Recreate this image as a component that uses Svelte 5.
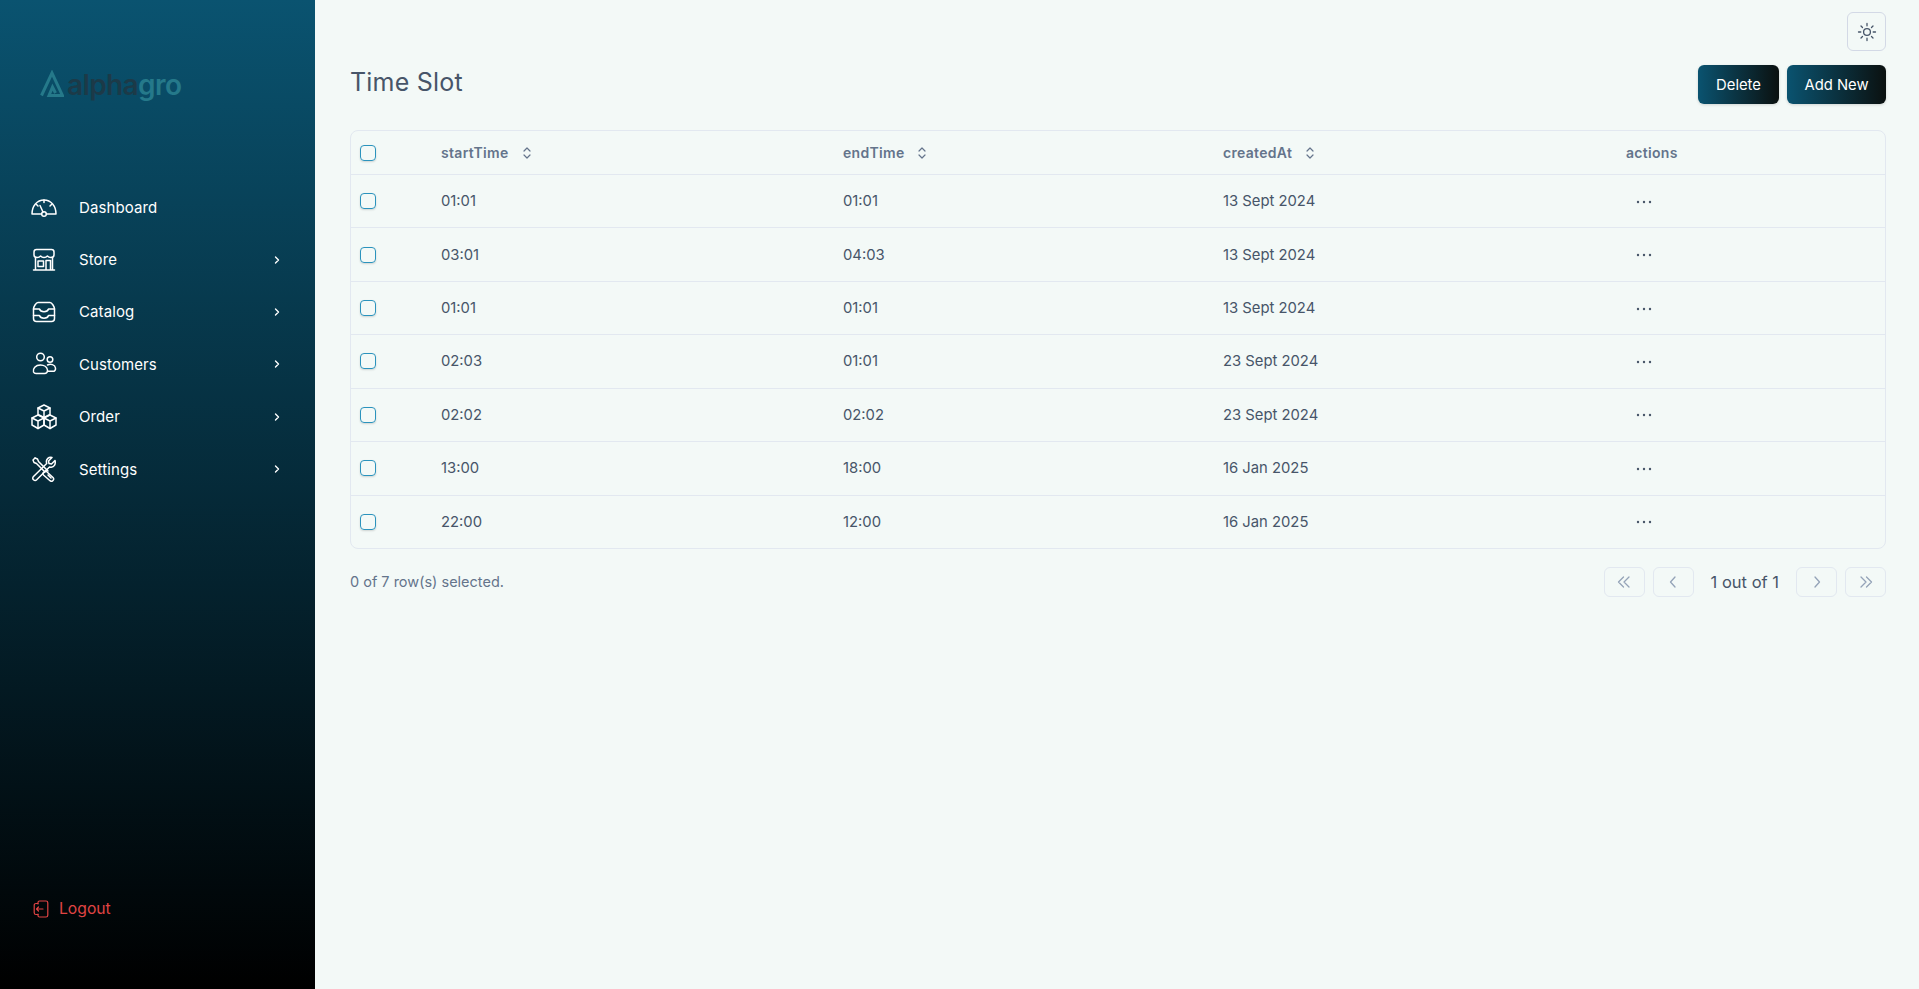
<script lang="ts">
  const navItems = [
    { label: 'Dashboard', icon: 'gauge', arrow: false },
    { label: 'Store', icon: 'store', arrow: true },
    { label: 'Catalog', icon: 'inbox', arrow: true },
    { label: 'Customers', icon: 'users', arrow: true },
    { label: 'Order', icon: 'boxes', arrow: true },
    { label: 'Settings', icon: 'tools', arrow: true }
  ];

  const rows = [
    { start: '01:01', end: '01:01', created: '13 Sept 2024' },
    { start: '03:01', end: '04:03', created: '13 Sept 2024' },
    { start: '01:01', end: '01:01', created: '13 Sept 2024' },
    { start: '02:03', end: '01:01', created: '23 Sept 2024' },
    { start: '02:02', end: '02:02', created: '23 Sept 2024' },
    { start: '13:00', end: '18:00', created: '16 Jan 2025' },
    { start: '22:00', end: '12:00', created: '16 Jan 2025' }
  ];
</script>

{#snippet sortIcon()}
  <svg class="sort" viewBox="0 0 10 16" width="10" height="16" fill="none" stroke="currentColor" stroke-width="1.2" stroke-linecap="round" stroke-linejoin="round">
    <path d="M2 6 5 3l3 3M2 10l3 3 3-3" />
  </svg>
{/snippet}

<div class="layout">
  <aside class="sidebar">
    <div class="logo">
      <svg viewBox="0 0 24 27" width="24" height="27" fill="none" stroke="#25798a" stroke-width="3" stroke-linejoin="miter">
        <path d="M1.500 25.500 12 3l10.500 22.500H9L12.500 17l3 6" />
      </svg>
      <span class="logo-text"><span class="dark">alpha</span><span class="teal">gro</span></span>
    </div>

    <nav class="nav">
      {#each navItems as item}
        <button class="nav-item">
          <span class="nav-icon">
            <svg viewBox="0 0 26 26" width="26" height="26" fill="none" stroke="currentColor" stroke-width="1.500" stroke-linecap="round" stroke-linejoin="round">
              {#if item.icon === 'gauge'}
                <path d="M10.500 20H1c0-8 5-14 12-14s12 6 12 14h-9.500" />
                <path d="M9 11.500 12 18M13 6v2.500M5.500 10.500 7 12M20.500 10.500 19 12" />
                <circle cx="13" cy="20" r="2.300" />
              {:else if item.icon === 'store'}
                <path d="M3 5C3 3.500 4 2.500 5.500 2.500h15C22 2.500 23 3.500 23 5v3c0 1.500-1.700 2.500-3.300 2.500-1.200 0-2.500-.6-3.300-1.500-.8.9-2.100 1.500-3.400 1.500s-2.600-.6-3.400-1.500c-.8.9-2.100 1.500-3.300 1.500C4.700 10.500 3 9.500 3 8z" />
                <path d="M4.500 10.500v12.500M21.500 10.500v12.500M2.500 23h21M15 23V13.500h4.500V23M7 14h5.500v5.500H7z" />
              {:else if item.icon === 'inbox'}
                <path d="M2.500 10C2.500 8 5 3.500 7 3.500h12c2 0 4.500 4.500 4.500 6.500v9.500a3 3 0 0 1-3 3h-15a3 3 0 0 1-3-3z" />
                <path d="M2.500 10h6c.5 1.700 2 2.700 4.500 2.700s4-1 4.500-2.700h6M2.500 16.500h6c.5 1.700 2 2.700 4.500 2.700s4-1 4.500-2.700h6" />
              {:else if item.icon === 'users'}
                <circle cx="9.500" cy="6" r="3.800" />
                <circle cx="19" cy="8.500" r="2.800" />
                <path d="M2.500 21c-1-3.500 2-7 7-7 3.500 0 6.500 2 7 5 .3 2-1 3.500-3 3.500H5c-1 0-2-.5-2.500-1.500z" />
                <path d="M16.500 14c3-1.500 7.500-.5 8 3 .3 2-1 3.300-2.500 3.300h-5.500" />
              {:else if item.icon === 'boxes'}
                <path d="M13 1l6 3v6.500l-6 3-6-3V4z" />
                <path d="M7 4l6 3 6-3M13 7v6.500" />
                <path d="M7 11l6 3v7l-6 3.500L1 21v-7z" />
                <path d="M1 14l6 3 6-3M7 17v7.500" />
                <path d="M19 11l6 3v7l-6 3.500L13 21v-7z" />
                <path d="M13 14l6 3 6-3M19 17v7.500" />
              {:else}
                <path d="M4 2 2 4l1 2.500 2.500 1L14 16" />
                <path d="M4 2l2.500 1 1 2.500L17 15" />
                <path d="M15.500 15.500 22 21.500a2.200 2.200 0 0 1-3 3.200L12.500 19c-.7-.7-.7-1.700 0-2.400l.9-.9c.6-.6 1.500-.7 2.100-.2zM20 22l-3-3" />
                <path d="M24 4.500 20.500 8l-2.500-.5-.5-2.500L21 1.500c-3-1-6.300 1.500-5.500 5l.2 1L2.500 20.500c-1 1-1 2.300 0 3.200s2.300.9 3.200 0L18.500 11l1 .2c3.500.6 5.500-3 4.500-6.700z" />
              {/if}
            </svg>
          </span>
          <span class="nav-label">{item.label}</span>
          {#if item.arrow}
            <svg class="chevron" viewBox="0 0 8 10" width="8" height="10" fill="none" stroke="currentColor" stroke-width="1.400" stroke-linecap="round" stroke-linejoin="round">
              <path d="M2.500 2 5.500 5l-3 3" />
            </svg>
          {/if}
        </button>
      {/each}
    </nav>

    <button class="logout">
      <svg viewBox="0 0 16 18" width="16" height="18" fill="none" stroke="currentColor" stroke-width="1.200" stroke-linecap="round" stroke-linejoin="round">
        <path d="M5 4V2.500C5 1.700 5.700 1 6.500 1h6.500c1 0 1.800.8 1.800 1.800v12.400c0 1-.8 1.800-1.800 1.800H6.500C5.700 17 5 16.300 5 15.500V14" />
        <path d="M5 3.500H3C2 3.500 1.200 4.300 1.200 5.300v7.400c0 1 .8 1.800 1.800 1.800h2M10 9H3.500M5.500 7l-2 2 2 2" />
      </svg>
      <span>Logout</span>
    </button>
  </aside>

  <main class="content">
    <div class="topbar">
      <button class="theme-btn" aria-label="Toggle theme">
        <svg viewBox="0 0 20 20" width="20" height="20" fill="none" stroke="currentColor" stroke-width="1.300" stroke-linecap="round">
          <circle cx="10" cy="10" r="3.400" />
          <path d="M10 1.500v2.300M10 16.200v2.300M1.500 10h2.300M16.200 10h2.300M4 4l1.500 1.500M14.500 14.500 16 16M4 16l1.500-1.500M14.500 5.500 16 4" />
        </svg>
      </button>
    </div>

    <div class="page-head">
      <h1>Time Slot</h1>
      <div class="head-actions">
        <button class="primary delete">Delete</button>
        <button class="primary add">Add New</button>
      </div>
    </div>

    <div class="table-wrap">
      <table>
        <colgroup>
          <col class="c-check" />
          <col class="c-start" />
          <col class="c-end" />
          <col class="c-created" />
          <col />
        </colgroup>
        <thead>
          <tr>
            <th><span class="checkbox"></span></th>
            <th><span class="th-inner">startTime {@render sortIcon()}</span></th>
            <th><span class="th-inner">endTime {@render sortIcon()}</span></th>
            <th><span class="th-inner">createdAt {@render sortIcon()}</span></th>
            <th>actions</th>
          </tr>
        </thead>
        <tbody>
          {#each rows as row}
            <tr>
              <td><span class="checkbox"></span></td>
              <td>{row.start}</td>
              <td>{row.end}</td>
              <td>{row.created}</td>
              <td>
                <button class="dots" aria-label="Row actions">
                  <svg viewBox="0 0 16 4" width="16" height="4" fill="currentColor">
                    <circle cx="2" cy="2" r="1.200" />
                    <circle cx="8" cy="2" r="1.200" />
                    <circle cx="14" cy="2" r="1.200" />
                  </svg>
                </button>
              </td>
            </tr>
          {/each}
        </tbody>
      </table>
    </div>

    <div class="table-foot">
      <span class="selected">0 of 7 row(s) selected.</span>
      <div class="pager">
        <button class="page-btn" aria-label="First page">
          <svg viewBox="0 0 16 16" width="16" height="16" fill="none" stroke="currentColor" stroke-width="1.300" stroke-linecap="round" stroke-linejoin="round"><path d="M7.500 3 2.500 8l5 5M13 3 8 8l5 5" /></svg>
        </button>
        <button class="page-btn" aria-label="Previous page">
          <svg viewBox="0 0 16 16" width="16" height="16" fill="none" stroke="currentColor" stroke-width="1.300" stroke-linecap="round" stroke-linejoin="round"><path d="M10 3 5.500 8l4.500 5" /></svg>
        </button>
        <span class="page-info">1 out of 1</span>
        <button class="page-btn" aria-label="Next page">
          <svg viewBox="0 0 16 16" width="16" height="16" fill="none" stroke="currentColor" stroke-width="1.300" stroke-linecap="round" stroke-linejoin="round"><path d="M6 3l4.500 5L6 13" /></svg>
        </button>
        <button class="page-btn" aria-label="Last page">
          <svg viewBox="0 0 16 16" width="16" height="16" fill="none" stroke="currentColor" stroke-width="1.300" stroke-linecap="round" stroke-linejoin="round"><path d="M3 3l5 5-5 5M8.500 3l5 5-5 5" /></svg>
        </button>
      </div>
    </div>
  </main>
</div>

<style>
  :global(body) {
    margin: 0;
    background: #f3f9f7;
    font-family: Inter, 'Noto Sans', sans-serif;
  }
  button {
    font-family: inherit;
    cursor: pointer;
  }
  .layout {
    display: flex;
    height: 989px;
    overflow: hidden;
  }
  .sidebar {
    width: 315px;
    flex-shrink: 0;
    display: flex;
    flex-direction: column;
    background: linear-gradient(180deg, #0a5370 0%, #000 100%);
    color: #fff;
  }
  .logo {
    display: flex;
    align-items: flex-end;
    gap: 3px;
    margin: 70px 0 0 40px;
    height: 27px;
  }
  .logo-text {
    margin-bottom: -2px;
    font-family: Inter, sans-serif;
    font-size: 28px;
    font-weight: 600;
    letter-spacing: -0.6px;
    line-height: 27px;
  }
  .dark {
    color: #1c3a48;
  }
  .teal {
    color: #25798a;
  }
  .nav {
    display: flex;
    flex-direction: column;
    margin-top: 84px;
    padding: 0 35px 0 31px;
  }
  .nav-item {
    display: flex;
    align-items: center;
    height: 52.4px;
    background: none;
    border: none;
    padding: 0;
    color: #fff;
    text-align: left;
  }
  .nav-icon {
    width: 26px;
    height: 26px;
    margin-right: 22px;
  }
  .nav-icon svg {
    display: block;
  }
  .nav-label {
    flex: 1;
    font-size: 15px;
    letter-spacing: 0.1px;
  }
  .chevron {
    margin-right: -1px;
  }
  .logout {
    display: flex;
    align-items: center;
    gap: 10px;
    margin: auto 0 71px 33px;
    background: none;
    border: none;
    padding: 0;
    color: #e04444;
    font-size: 15.700px;
  }
  .content {
    flex: 1;
    min-width: 0;
    padding: 12px 33px 0 35px;
    color: #475569;
  }
  .topbar {
    display: flex;
    justify-content: flex-end;
    height: 39px;
  }
  .theme-btn {
    width: 39px;
    height: 39px;
    display: flex;
    align-items: center;
    justify-content: center;
    padding: 0;
    background: #f3f9f7;
    border: 1px solid #d3d9e6;
    border-radius: 6px;
    color: #475569;
  }
  .page-head {
    display: flex;
    justify-content: space-between;
    align-items: flex-start;
    margin-top: 14px;
    height: 39px;
  }
  h1 {
    margin: 0;
    font-size: 25px;
    line-height: 34px;
    font-weight: 400;
    letter-spacing: 0.2px;
    color: #475569;
  }
  .head-actions {
    display: flex;
    gap: 8px;
  }
  .primary {
    height: 39px;
    border: none;
    border-radius: 6px;
    color: #fff;
    font-size: 14.800px;
    background: linear-gradient(90deg, #0a5370 0%, #0b1110 100%);
    box-shadow: 0 1px 3px rgba(0, 0, 0, 0.15);
  }
  .delete {
    width: 81px;
  }
  .add {
    width: 99px;
  }
  .table-wrap {
    margin-top: 26px;
    border: 1px solid #e2e8f0;
    border-radius: 8px;
    overflow: hidden;
  }
  table {
    width: 100%;
    border-collapse: collapse;
    table-layout: fixed;
    font-size: 14.800px;
  }
  .c-check {
    width: 82px;
  }
  .c-start {
    width: 402px;
  }
  .c-end {
    width: 380px;
  }
  .c-created {
    width: 403px;
  }
  th {
    height: 43px;
    padding: 0 8px;
    text-align: left;
    font-weight: 600;
    font-size: 14px;
    letter-spacing: 0.3px;
    color: #64748b;
    border-bottom: 1px solid #e2e8f0;
  }
  td {
    height: 52.430px;
    padding: 0 8px;
    color: #475569;
    border-bottom: 1px solid #e2e8f0;
  }
  tbody tr:last-child td {
    border-bottom: none;
  }
  .th-inner {
    display: inline-flex;
    align-items: center;
    gap: 13px;
  }
  .sort {
    color: #64748b;
  }
  .checkbox {
    display: block;
    width: 14px;
    height: 14px;
    margin-left: 1px;
    border: 1.500px solid #2b93bd;
    border-radius: 4px;
    box-shadow: 0 1px 2px rgba(0, 0, 0, 0.15);
  }
  .dots {
    display: block;
    margin-left: 10px;
    padding: 0;
    background: none;
    border: none;
    color: #475569;
    line-height: 0;
  }
  .table-foot {
    display: flex;
    justify-content: space-between;
    align-items: center;
    margin-top: 18px;
  }
  .selected {
    font-size: 14.500px;
    color: #64748b;
  }
  .pager {
    display: flex;
    align-items: center;
    gap: 8px;
  }
  .page-btn {
    width: 41px;
    height: 30px;
    display: flex;
    align-items: center;
    justify-content: center;
    padding: 0;
    background: none;
    border: 1px solid #e2e8f0;
    border-radius: 6px;
    color: #94a3b8;
  }
  .page-info {
    margin: 0 9px;
    font-size: 16.500px;
    color: #475569;
  }
</style>
